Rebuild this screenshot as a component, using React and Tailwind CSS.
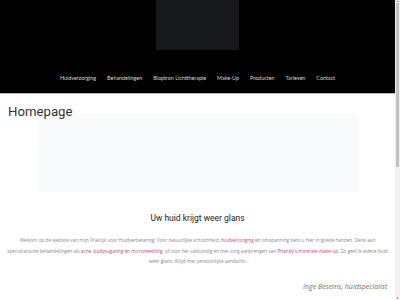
const NAV = ['Huidverzorging', 'Behandelingen', 'Bioptron Lichttherapie', 'Make-Up', 'Producten', 'Tarieven', 'Contact'];

function Pink({ children }) {
  return <span className="text-[#d63a78]">{children}</span>;
}

export default function App() {
  return (
    <div className="flex h-[300px] w-[400px] overflow-hidden bg-white">
      <div className="flex w-[395px] flex-col">
        <header className="flex h-[93px] flex-col items-center bg-black">
          <div className="h-[50px] w-[83px] bg-[#17181a]" />
          <nav
            className="mt-[26px] flex gap-[11px] text-[5.4px] leading-none text-[#d8d8d8]"
            style={{ fontFamily: 'Lato, "Open Sans", sans-serif' }}
          >
            {NAV.map((item) => (
              <span key={item}>{item}</span>
            ))}
          </nav>
        </header>
        <div className="h-px bg-[#b5b5b5]" />

        <main className="flex flex-col" style={{ fontFamily: 'Roboto, "Liberation Sans", sans-serif' }}>
          <h1 className="relative z-10 ml-[8px] mt-[11px] text-[13.2px] leading-[14px] text-[#333]">Homepage</h1>
          <div className="ml-[38px] mt-[-5px] h-[78px] w-[320px] bg-[#f9fafc]" />

          <h2 className="mt-[21px] text-center text-[8.5px] leading-[10px] text-[#222]">
            Uw huid krijgt weer glans
          </h2>

          <p
            className="mt-[12px] whitespace-nowrap text-center text-[4.7px] leading-[10.5px] text-[#888]"
            style={{ fontFamily: '"Open Sans", sans-serif' }}
          >
            Welkom op de website van mijn Praktijk voor Huidverbetering. Voor natuurlijke schoonheid,{' '}
            <Pink>huidverzorging</Pink> en ontspanning bent u hier in goede handen. Denk aan
            <br />
            specialistische behandelingen als <Pink>acne</Pink>, <Pink>bodysugaring en microneedling</Pink>, of voor
            het vakkundig en met zorg aanbrengen van <Pink>Phandy's minerale make-up</Pink>. Zo geef ik iedere huid
            <br />
            weer glans. Altijd met persoonlijke aandacht.
          </p>

          <p
            className="mr-[8px] mt-[15px] text-right text-[7px] italic leading-[9px] text-[#6f6f6f]"
            style={{ fontFamily: '"Open Sans", sans-serif' }}
          >
            Inge Besems, huidspecialist
          </p>
        </main>
      </div>

      <div className="flex w-[5px] flex-col bg-[#f1f1f1]">
        <div className="h-[3px] text-center text-[3px] leading-[3px] text-[#666]">▲</div>
        <div className="mx-auto h-[164px] w-[3px] bg-[#c1c1c1]" />
        <div className="flex-1" />
        <div className="h-[3px] text-center text-[3px] leading-[3px] text-[#666]">▼</div>
      </div>
    </div>
  );
}
